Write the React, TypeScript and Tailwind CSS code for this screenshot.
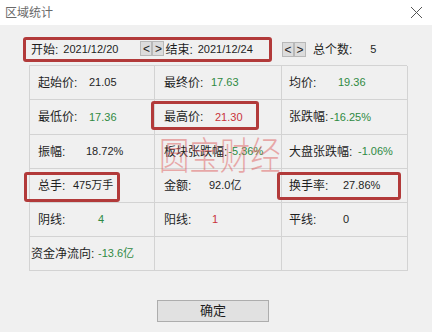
import React from "react";

type Cell = { label: string; value: string; color?: string; lw: string; box?: boolean };

const font = { fontFamily: '"Liberation Sans", "Noto Sans CJK SC", sans-serif' };

const green = "text-[#2f8a43]";
const red = "text-[#c8323a]";

const rows: Cell[][] = [
  [
    { label: "起始价:", value: "21.05", lw: "min-w-[51px]" },
    { label: "最终价:", value: "17.63", color: green, lw: "min-w-[47px]" },
    { label: "均价:", value: "19.36", color: green, lw: "min-w-[49px]" },
  ],
  [
    { label: "最低价:", value: "17.36", color: green, lw: "min-w-[51px]" },
    { label: "最高价:", value: "21.30", color: red, lw: "min-w-[51px]", box: true },
    { label: "张跌幅:", value: "-16.25%", color: green, lw: "min-w-[41px] pr-[1px]" },
  ],
  [
    { label: "振幅:", value: "18.72%", lw: "min-w-[48px]" },
    { label: "板块张跌幅:", value: "-5.36%", color: green, lw: "min-w-[63px] pr-[1px]" },
    { label: "大盘张跌幅:", value: "-1.06%", color: green, lw: "min-w-[69px] pr-[4px]" },
  ],
  [
    { label: "总手:", value: "475万手", lw: "min-w-[35px]", box: true },
    { label: "金额:", value: "92.0亿", lw: "min-w-[45px]" },
    { label: "换手率:", value: "27.86%", lw: "min-w-[54px]", box: true },
  ],
  [
    { label: "阴线:", value: "4", color: green, lw: "min-w-[60px]" },
    { label: "阳线:", value: "1", color: red, lw: "min-w-[48px]" },
    { label: "平线:", value: "0", lw: "min-w-[54px]" },
  ],
];

const colPad = ["pl-[8px]", "pl-[9px]", "pl-[7px]"];
const rowH = ["h-[34px]", "h-[35px]", "h-[34px]", "h-[34px]", "h-[34px]"];

function Arrow({ ch }: { ch: string }) {
  return (
    <div className="w-[12px] h-[15px] bg-[#dcdcdc] border border-[#b8b8b8] flex items-center justify-center text-[12px] leading-none text-[#222]">
      {ch}
    </div>
  );
}

export default function App() {
  return (
    <div className="w-[432px] h-[332px] bg-[#f0f0f0] overflow-hidden text-[12px] text-[#1e1e1e]" style={font}>
      {/* title bar */}
      <div className="h-[25px] bg-white flex items-center justify-between pl-[5px] pr-[9px]">
        <span className="text-[12px] text-[#6a6a6a]">区域统计</span>
        <svg width="13" height="13" viewBox="0 0 13 13">
          <path d="M1 1 L12 12 M12 1 L1 12" stroke="#555" strokeWidth="1" fill="none" />
        </svg>
      </div>

      {/* header row */}
      <div className="flex items-center h-[25px] mt-[12px] pl-[23px]">
        <div className="relative flex items-center h-[25px] w-[249px] border-[3px] border-[#b23a3a] rounded-[3px] pl-[5px]">
          <span>开始:</span>
          <span className="ml-[5px] text-[11px]">2021/12/20</span>
          <div className="flex ml-[22px] mt-[-2px]">
            <Arrow ch="<" />
            <Arrow ch=">" />
          </div>
          <span className="ml-[1px]">结束:</span>
          <span className="ml-[5px] text-[11px]">2021/12/24</span>
        </div>
        <div className="flex ml-[10px]">
          <Arrow ch="<" />
          <Arrow ch=">" />
        </div>
        <span className="ml-[7px]">总个数:</span>
        <span className="ml-[18px] text-[11px]">5</span>
      </div>

      {/* grid */}
      <div className="relative ml-[29px] mt-[3px] w-[378px] border-t border-l border-[#d3d3d3]">
        {rows.map((r, ri) => (
          <div key={ri} className={`grid grid-cols-[125px_127px_126px] ${rowH[ri]}`}>
            {r.map((c, ci) => (
              <div key={ci} className={`relative flex items-center whitespace-nowrap border-r border-b border-[#d3d3d3] ${colPad[ci]}`}>
                {c.box && (
                  <div
                    className={
                      ci === 0
                        ? "absolute left-[-6px] top-[3px] w-[96px] h-[30px] border-[3px] border-[#b23a3a] rounded-[3px]"
                        : ci === 1
                        ? "absolute left-[-4px] top-[1px] w-[108px] h-[29px] border-[3px] border-[#b23a3a] rounded-[3px]"
                        : "absolute left-[-5px] top-[3px] w-[124px] h-[28px] border-[3px] border-[#b23a3a] rounded-[3px]"
                    }
                  />
                )}
                <span className={`${c.lw} shrink-0`}>{c.label}</span>
                <span className={`text-[11px] ${c.color ?? ""}`}>{c.value}</span>
              </div>
            ))}
          </div>
        ))}
        <div className="grid grid-cols-[125px_127px_126px] h-[34px]">
          <div className="flex items-center whitespace-nowrap border-r border-b border-[#d3d3d3] pl-[1px]">
            <span className="min-w-[67px] shrink-0">资金净流向:</span>
            <span className={`text-[11px] ${green}`}>-13.6亿</span>
          </div>
          <div className="border-r border-b border-[#d3d3d3]" />
          <div className="border-r border-b border-[#d3d3d3]" />
        </div>

        {/* watermark */}
        <div
          className="absolute left-[129px] top-[68px] origin-top-left scale-x-[0.8] text-[38px] leading-none text-[#e06060] opacity-50 font-light pointer-events-none whitespace-nowrap"
          style={{ fontFamily: '"Noto Sans CJK SC", sans-serif' }}
        >
          圆宝财经
        </div>
      </div>

      {/* button */}
      <div className="flex mt-[29px] pl-[157px]">
        <div className="w-[112px] h-[22px] bg-[#e1e1e1] border border-[#adadad] flex items-center justify-center text-[13px]">
          确定
        </div>
      </div>
    </div>
  );
}
